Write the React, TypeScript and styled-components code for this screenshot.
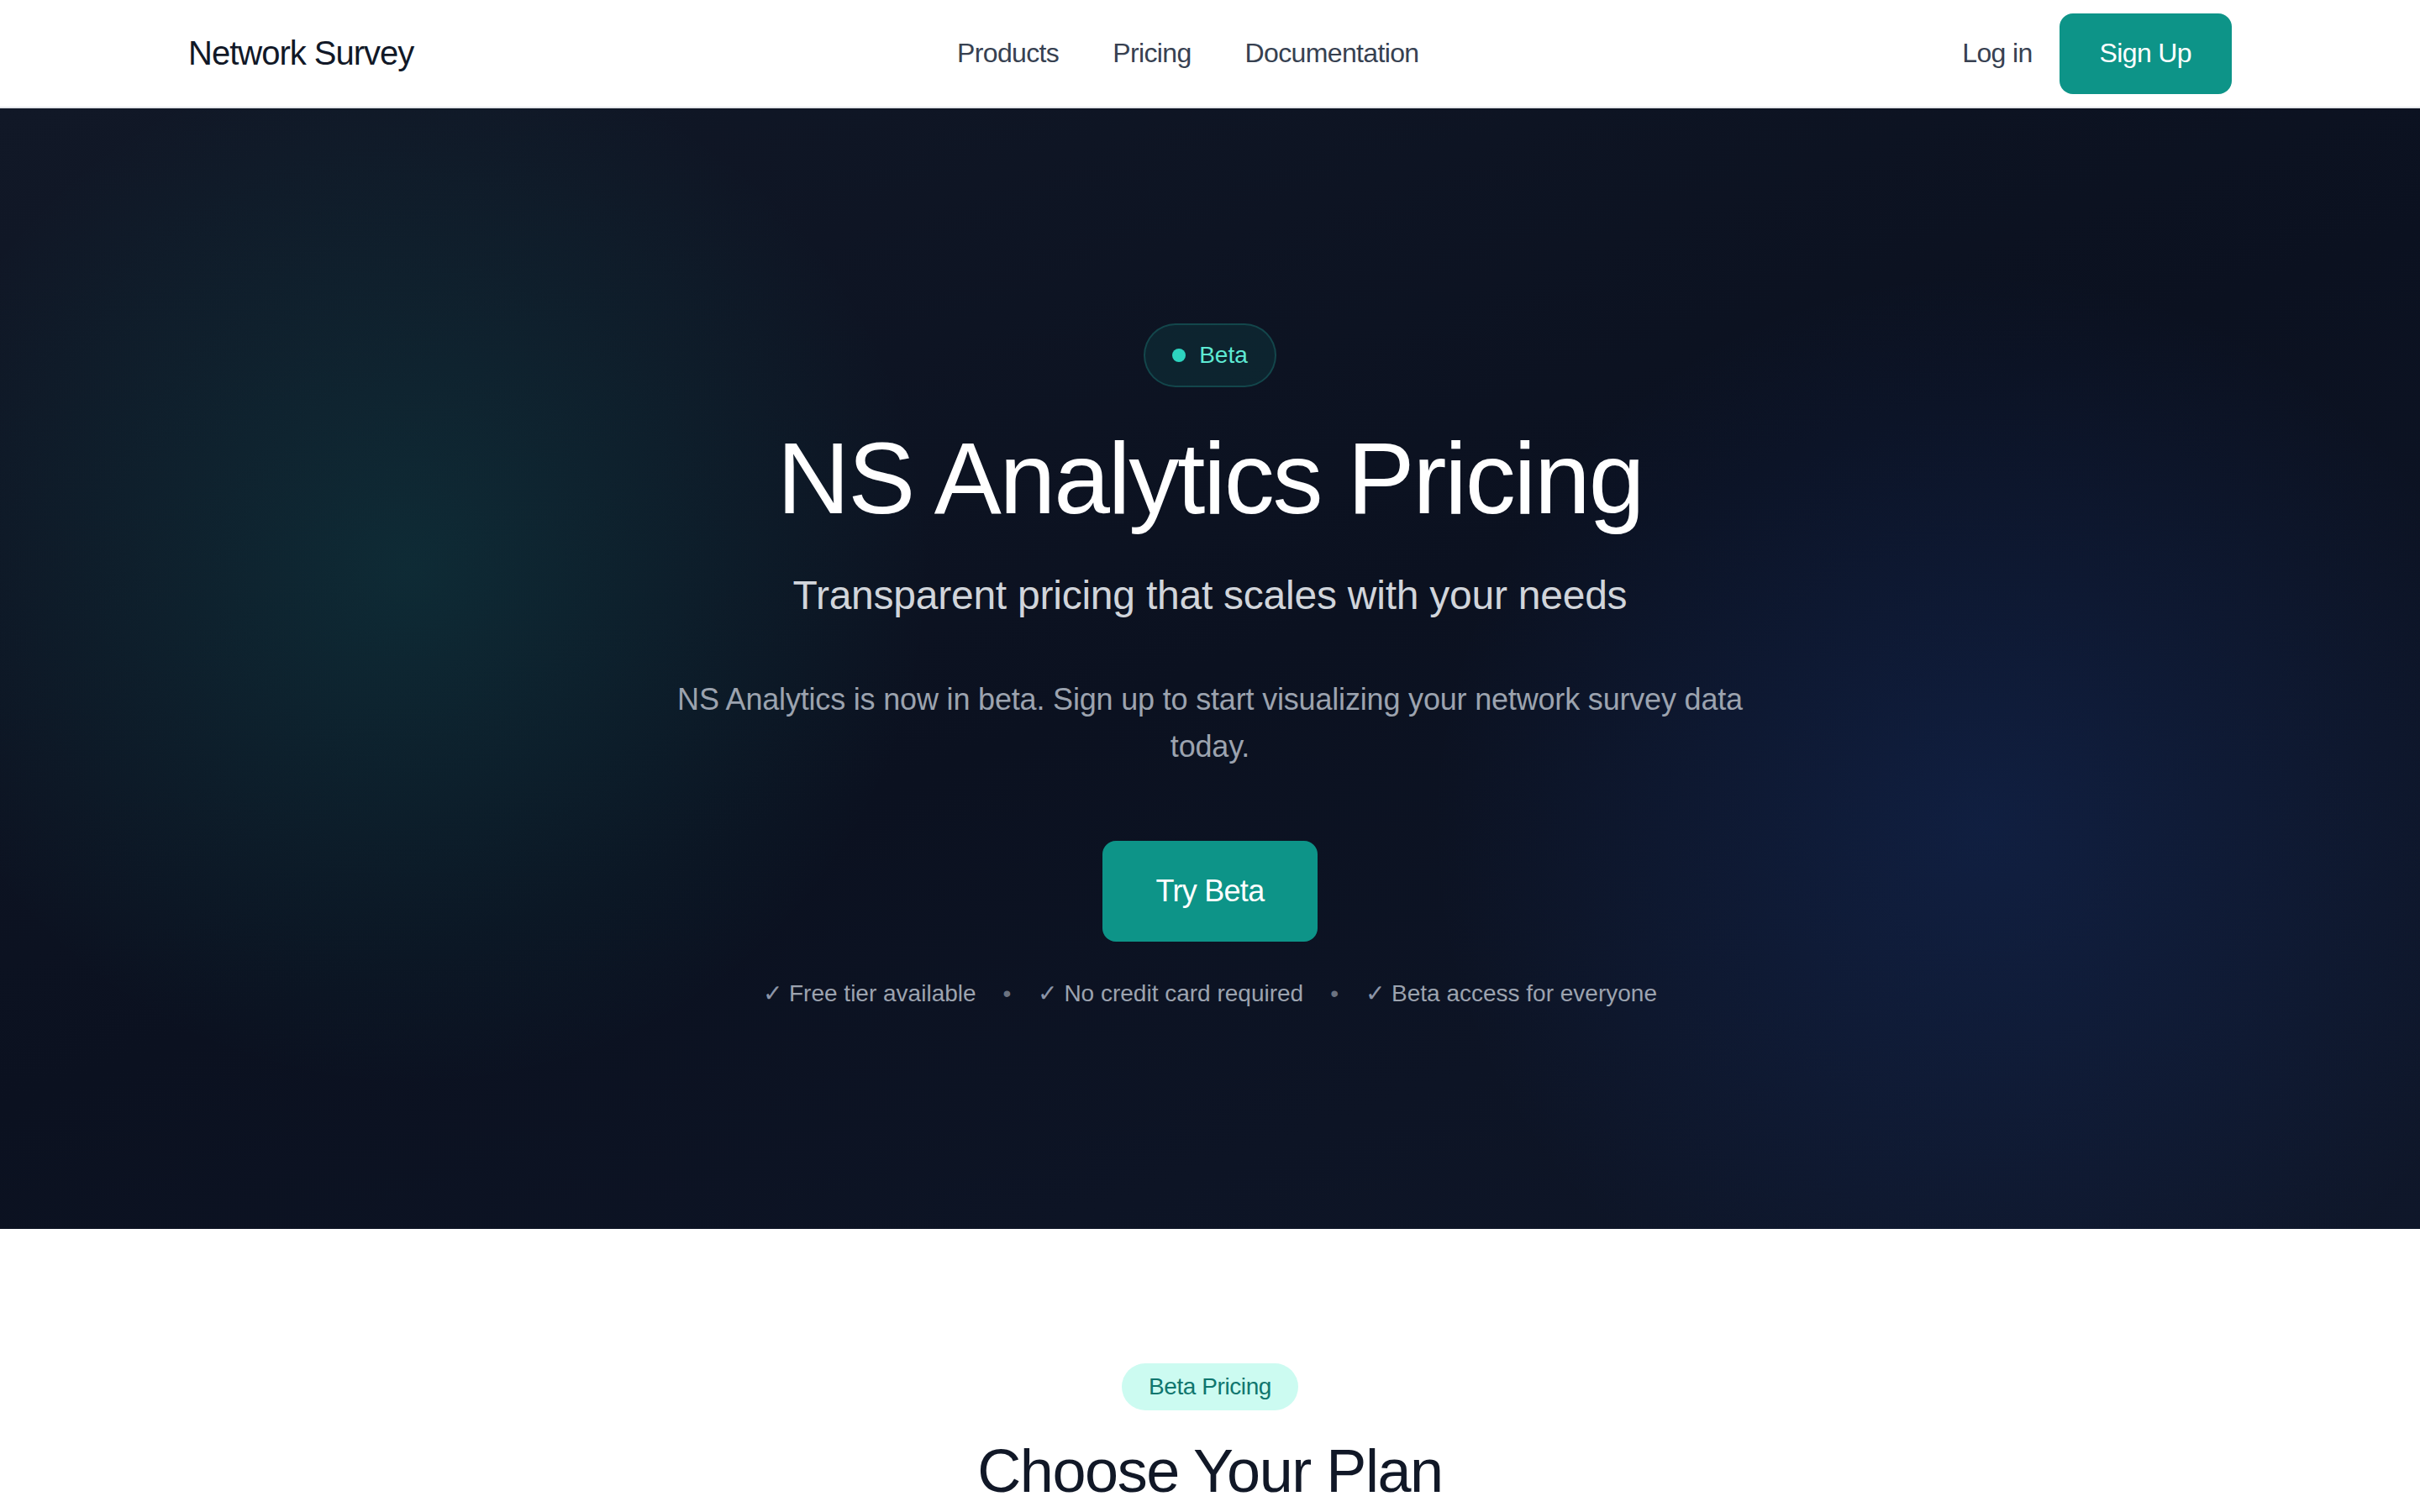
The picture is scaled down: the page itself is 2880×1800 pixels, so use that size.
import React from 'react';
import styled, { createGlobalStyle } from 'styled-components';

const GlobalStyle = createGlobalStyle`
    * {
        box-sizing: border-box;
    }

    body {
        margin: 0;
        background: #ffffff;
        font-family: "Liberation Sans", Arial, "DejaVu Sans", sans-serif;
        -webkit-font-smoothing: antialiased;
    }
`;

const perks = ['Free tier available', 'No credit card required', 'Beta access for everyone'];
const navLinks = ['Products', 'Pricing', 'Documentation'];

const App = (): JSX.Element => {
    return (
        <>
            <GlobalStyle />
            <Page>
                <NavBar>
                    <NavInner>
                        <Brand>Network Survey</Brand>
                        <NavLinks>
                            {navLinks.map((link) => (
                                <NavLink key={link} href="#">{link}</NavLink>
                            ))}
                        </NavLinks>
                        <NavActions>
                            <NavLink href="#">Log in</NavLink>
                            <PrimaryButton>Sign Up</PrimaryButton>
                        </NavActions>
                    </NavInner>
                </NavBar>

                <Hero>
                    <HeroContent>
                        <BetaBadge>
                            <BadgeDot />
                            Beta
                        </BetaBadge>
                        <HeroTitle>NS Analytics Pricing</HeroTitle>
                        <HeroSubtitle>Transparent pricing that scales with your needs</HeroSubtitle>
                        <HeroText>
                            NS Analytics is now in beta. Sign up to start visualizing your network survey data today.
                        </HeroText>
                        <CtaButton>Try Beta</CtaButton>
                        <PerkList>
                            {perks.map((perk, index) => (
                                <React.Fragment key={perk}>
                                    {index > 0 && <PerkSeparator>•</PerkSeparator>}
                                    <Perk>
                                        <PerkCheck>✓</PerkCheck>
                                        {perk}
                                    </Perk>
                                </React.Fragment>
                            ))}
                        </PerkList>
                    </HeroContent>
                </Hero>

                <PlansSection>
                    <SectionPill>Beta Pricing</SectionPill>
                    <SectionTitle>Choose Your Plan</SectionTitle>
                </PlansSection>
            </Page>
        </>
    );
};

const Page = styled.div`
    min-height: 100vh;
    background: #ffffff;
`;

const NavBar = styled.header`
    height: 129px;
    background: #ffffff;
    border-bottom: 2px solid #e5e7eb;
`;

const NavInner = styled.div`
    display: flex;
    align-items: center;
    justify-content: space-between;

    max-width: 2560px;
    height: 100%;
    margin: 0 auto;
    padding: 0 64px;
`;

const Brand = styled.div`
    font-size: 40px;
    letter-spacing: -0.025em;
    color: #111827;
`;

const NavLinks = styled.nav`
    display: flex;
    align-items: center;
    gap: 64px;
`;

const NavLink = styled.a`
    font-size: 32px;
    letter-spacing: -0.02em;
    color: #374151;
    text-decoration: none;
`;

const NavActions = styled.div`
    display: flex;
    align-items: center;
    gap: 32px;
`;

const PrimaryButton = styled.button`
    height: 96px;
    padding: 0 48px;

    font-family: inherit;
    font-size: 32px;
    letter-spacing: -0.02em;
    color: #ffffff;

    background: #0d9488;
    border: none;
    border-radius: 16px;
    cursor: pointer;
`;

const Hero = styled.section`
    padding: 256px 64px 260px;

    background:
        radial-gradient(circle at 17% 41%, rgba(20, 184, 166, 0.14) 0, rgba(20, 184, 166, 0.06) 360px, transparent 620px),
        radial-gradient(circle at 82% 64%, rgba(37, 99, 235, 0.14) 0, rgba(37, 99, 235, 0.06) 400px, transparent 660px),
        linear-gradient(160deg, #111827 0%, #0b1120 50%, #0f172a 100%);
`;

const HeroContent = styled.div`
    display: flex;
    flex-direction: column;
    align-items: center;

    max-width: 1536px;
    margin: 0 auto;
    text-align: center;
`;

const BetaBadge = styled.div`
    display: inline-flex;
    align-items: center;
    gap: 16px;

    height: 76px;
    padding: 0 32px;
    margin-bottom: 48px;

    font-size: 28px;
    color: #5eead4;

    background: rgba(20, 184, 166, 0.1);
    border: 2px solid rgba(45, 212, 191, 0.2);
    border-radius: 999px;
`;

const BadgeDot = styled.span`
    width: 16px;
    height: 16px;
    border-radius: 50%;
    background: #2dd4bf;
`;

const HeroTitle = styled.h1`
    margin: 0 0 48px;

    font-size: 120px;
    font-weight: 400;
    line-height: 1;
    letter-spacing: -0.018em;
    color: #ffffff;
`;

const HeroSubtitle = styled.p`
    margin: 0 0 64px;

    font-size: 48px;
    line-height: 64px;
    letter-spacing: -0.005em;
    color: #d1d5db;
`;

const HeroText = styled.p`
    max-width: 1344px;
    margin: 0 0 84px;

    font-size: 36px;
    line-height: 56px;
    letter-spacing: -0.005em;
    color: #9ca3af;
`;

const CtaButton = styled.button`
    height: 120px;
    padding: 0 64px;

    font-family: inherit;
    font-size: 36px;
    letter-spacing: -0.02em;
    color: #ffffff;

    background: #0d9488;
    border: none;
    border-radius: 16px;
    cursor: pointer;
`;

const PerkList = styled.div`
    display: flex;
    align-items: center;
    gap: 32px;
    margin-top: 42px;

    font-size: 28px;
    line-height: 40px;
    color: #9ca3af;
`;

const Perk = styled.span`
    display: inline-flex;
    align-items: center;
    gap: 8px;
`;

const PerkCheck = styled.span`
    font-weight: 300;
    color: #8b95a8;
`;

const PerkSeparator = styled.span`
    color: #6b7280;
`;

const PlansSection = styled.section`
    display: flex;
    flex-direction: column;
    align-items: center;

    padding: 160px 64px;
    background: #ffffff;
`;

const SectionPill = styled.span`
    display: inline-flex;
    align-items: center;

    height: 56px;
    padding: 0 32px;
    margin-bottom: 32px;

    font-size: 28px;
    letter-spacing: -0.015em;
    color: #0f766e;

    background: #ccfbf1;
    border-radius: 999px;
`;

const SectionTitle = styled.h2`
    margin: 0;

    font-size: 72px;
    font-weight: 400;
    line-height: 80px;
    letter-spacing: -0.02em;
    color: #111827;
`;

export default App;
